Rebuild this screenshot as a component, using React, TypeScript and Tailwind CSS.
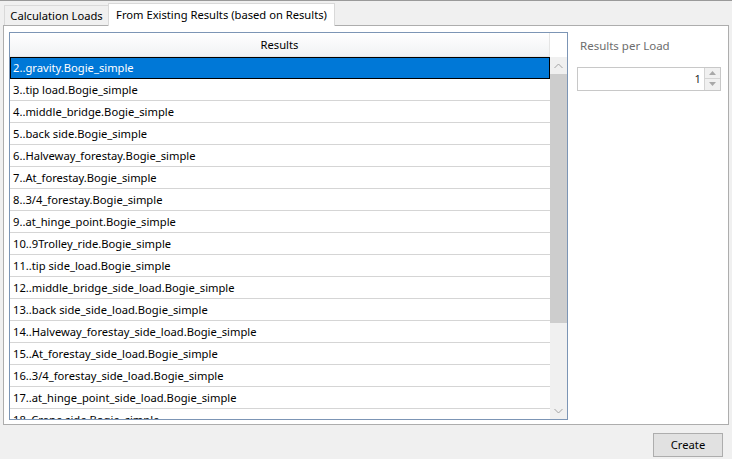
import React from "react";

const rows = [
  "2..gravity.Bogie_simple",
  "3..tip load.Bogie_simple",
  "4..middle_bridge.Bogie_simple",
  "5..back side.Bogie_simple",
  "6..Halveway_forestay.Bogie_simple",
  "7..At_forestay.Bogie_simple",
  "8..3/4_forestay.Bogie_simple",
  "9..at_hinge_point.Bogie_simple",
  "10..9Trolley_ride.Bogie_simple",
  "11..tip side_load.Bogie_simple",
  "12..middle_bridge_side_load.Bogie_simple",
  "13..back side_side_load.Bogie_simple",
  "14..Halveway_forestay_side_load.Bogie_simple",
  "15..At_forestay_side_load.Bogie_simple",
  "16..3/4_forestay_side_load.Bogie_simple",
  "17..at_hinge_point_side_load.Bogie_simple",
  "18..Crane side.Bogie_simple",
];

export default function App() {
  return (
    <div
      className="w-[732px] h-[459px] bg-[#f0f0f0] border-t border-[#9a9a9a] flex flex-col overflow-hidden text-[11.2px] text-black whitespace-nowrap"
      style={{ fontFamily: '"Noto Sans", "Open Sans", sans-serif' }}
    >
      {/* Tabs */}
      <div className="h-[24px] flex items-end pl-[4px] shrink-0">
        <div className="h-[20px] w-[104px] border-l border-t border-[#d9d9d9] bg-[#f0f0f0] flex items-center justify-center leading-none">
          Calculation Loads
        </div>
        <div className="relative z-10 -mb-px h-[23px] w-[227px] border-l border-t border-r border-[#d9d9d9] bg-white flex items-center justify-center leading-none pb-[1px]">
          From Existing Results (based on Results)
        </div>
      </div>

      {/* Panel */}
      <div className="mx-[3px] h-[400px] shrink-0 border border-[#adadad] bg-white flex pl-[5px] pt-[6px]">
        {/* Grid */}
        <div className="w-[559px] h-[388px] border border-[#7c95b5] flex flex-col overflow-hidden">
          {/* Header */}
          <div className="h-[24px] flex shrink-0">
            <div className="w-[540px] h-full border-r border-b border-[#e5e5e5] bg-gradient-to-b from-white to-[#f1f2f4] flex items-center justify-center leading-none">
              Results
            </div>
            <div className="flex-1 bg-white" />
          </div>
          <div className="flex flex-1 min-h-0">
            {/* Rows */}
            <div className="w-[540px] flex flex-col overflow-hidden">
              {rows.map((r, i) =>
                i === 0 ? (
                  <div
                    key={r}
                    className="h-[22px] shrink-0 bg-[#0078d7] border border-black text-white flex items-center pl-[2px] leading-none"
                  >
                    {r}
                  </div>
                ) : (
                  <div
                    key={r}
                    className="h-[22px] shrink-0 border-b border-[#d5d5d5] flex items-center pl-[3px] leading-none"
                  >
                    {r}
                  </div>
                )
              )}
            </div>
            {/* Scrollbar */}
            <div className="w-[17px] bg-[#f0f0f0] flex flex-col">
              <div className="h-[17px] flex items-center justify-center shrink-0">
                <svg width="9" height="6" viewBox="0 0 9 6">
                  <path d="M0.5 5 L4.5 1 L8.5 5" fill="none" stroke="#a3a3a3" strokeWidth="1" />
                </svg>
              </div>
              <div className="h-[249px] bg-[#cdcdcd] shrink-0" />
              <div className="flex-1" />
              <div className="h-[17px] flex items-center justify-center shrink-0">
                <svg width="9" height="6" viewBox="0 0 9 6">
                  <path d="M0.5 1 L4.5 5 L8.5 1" fill="none" stroke="#a3a3a3" strokeWidth="1" />
                </svg>
              </div>
            </div>
          </div>
        </div>

        {/* Right side */}
        <div className="ml-[9px] flex flex-col pt-[8px]">
          <div className="text-[#6d6d6d] leading-none pl-[3px] text-[11.5px]">Results per Load</div>
          <div className="mt-[15px] w-[144px] h-[24px] border border-[#c8c8c8] flex bg-white">
            <div className="flex-1 flex items-center justify-end pr-[3px] text-[#2a2a2a] leading-none">1</div>
            <div className="w-[16px] flex flex-col border-l border-[#d4d4d4]">
              <div className="flex-1 bg-[#f0f0f0] border-b border-[#d4d4d4] flex items-center justify-center">
                <svg width="7" height="4" viewBox="0 0 7 4">
                  <path d="M0 4 L3.5 0 L7 4 Z" fill="#a8a8a8" />
                </svg>
              </div>
              <div className="flex-1 bg-[#f0f0f0] flex items-center justify-center">
                <svg width="7" height="4" viewBox="0 0 7 4">
                  <path d="M0 0 L3.5 4 L7 0 Z" fill="#a8a8a8" />
                </svg>
              </div>
            </div>
          </div>
        </div>
      </div>

      {/* Bottom */}
      <div className="flex-1 flex justify-end items-start pt-[8px] pr-[9px]">
        <div className="w-[70px] h-[24px] bg-[#e1e1e1] border border-[#adadad] flex items-center justify-center leading-none">
          Create
        </div>
      </div>
    </div>
  );
}
